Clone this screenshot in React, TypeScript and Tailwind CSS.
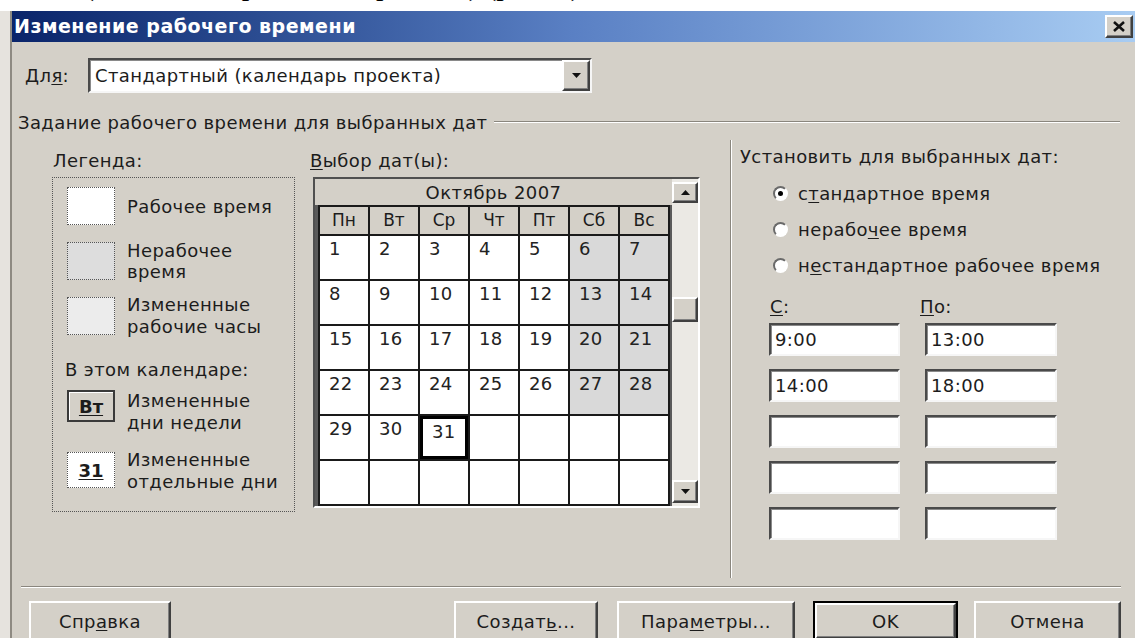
import React from 'react';

// Classic-style dialog for editing working time of a project calendar
const ui = "font-['DejaVu_Sans',Verdana,sans-serif]";

const raised =
  'border-2 border-t-white border-l-white border-b-[#404040] border-r-[#404040] shadow-[inset_-1px_-1px_0_#808080] bg-[#d4d0c8]';
const sunken =
  'border-2 border-t-[#4a4a4a] border-l-[#4a4a4a] border-b-[#f6f6f6] border-r-[#f6f6f6] shadow-[inset_1px_1px_0_#8a8a8a]';

type Cell = { n?: number; off?: boolean; sel?: boolean };

const days = ['Пн', 'Вт', 'Ср', 'Чт', 'Пт', 'Сб', 'Вс'];

const weeks: Cell[][] = Array.from({ length: 6 }, (_, w) =>
  Array.from({ length: 7 }, (_, d) => {
    const n = w * 7 + d + 1;
    if (n > 31) return {};
    return { n, off: d >= 5, sel: n === 31 };
  })
);

const Key = ({ children }: { children: React.ReactNode }) => (
  <span className="underline underline-offset-2">{children}</span>
);

const Arrow = ({ up }: { up?: boolean }) => (
  <svg width="9" height="5" viewBox="0 0 9 5">
    <polygon points={up ? '0,5 9,5 4.5,0' : '0,0 9,0 4.5,5'} fill="#111" />
  </svg>
);

function LegendItem({
  swatch,
  lines,
  boxTop = 0,
}: {
  swatch: React.ReactNode;
  lines: string[];
  boxTop?: number;
}) {
  return (
    <div className="flex items-start">
      <div style={{ marginTop: boxTop }}>{swatch}</div>
      <div className="ml-[12px] leading-[22px] whitespace-nowrap">
        {lines.map((l) => (
          <div key={l}>{l}</div>
        ))}
      </div>
    </div>
  );
}

function Radio({ checked, children }: { checked?: boolean; children: React.ReactNode }) {
  return (
    <div className="flex items-center h-[20px]">
      <div className="w-[15px] h-[15px] rounded-full border-2 border-t-[#6a6a6a] border-l-[#6a6a6a] border-b-white border-r-white bg-white flex items-center justify-center">
        {checked && <div className="w-[5px] h-[5px] rounded-full bg-black" />}
      </div>
      <span className="ml-[10px] whitespace-nowrap">{children}</span>
    </div>
  );
}

function TimeBox({ value }: { value?: string }) {
  return (
    <div className={`h-[33px] ${sunken} bg-white flex items-center pl-[4px]`}>{value}</div>
  );
}

function Button({
  width,
  className = '',
  isDefault,
  children,
}: {
  width: number;
  className?: string;
  isDefault?: boolean;
  children: React.ReactNode;
}) {
  return (
    <div
      className={`h-[40px] shrink-0 ${isDefault ? 'border-2 border-black' : ''} ${className}`}
      style={{ width }}
    >
      <div className={`h-full ${raised} flex items-center justify-center`}>{children}</div>
    </div>
  );
}

export default function App() {
  return (
    <div
      className={`w-[1135px] h-[638px] overflow-hidden bg-[#e6e3de] flex flex-col ${ui} text-[18px] tracking-[0.4px] text-[#1c1c1c]`}
    >
      {/* tail of the text line above the figure */}
      <div className="h-[11px] shrink-0 bg-white overflow-hidden">
        <div className="-mt-[30px] pl-[84px] font-['Liberation_Serif',serif] text-[30px] leading-[30px] tracking-normal text-black whitespace-nowrap">
          (Изменение рабочего времени) (рис. 5)
        </div>
      </div>

      <div className="flex-1 ml-[10px] border-l-2 border-l-[#8e8a82] bg-[#d4d0c8] flex flex-col">
        {/* title bar */}
        <div className="h-[31px] shrink-0 bg-linear-to-r from-[#0a246a] via-[#5a80c4] to-[#a8ccf2] flex items-center justify-between pl-[2px] pr-[2px]">
          <span className="text-white font-bold text-[19px] tracking-[0.5px]">
            Изменение рабочего времени
          </span>
          <div className={`w-[28px] h-[23px] ${raised} flex items-center justify-center`}>
            <svg width="12" height="11" viewBox="0 0 12 11">
              <path d="M1 1 L11 10 M11 1 L1 10" stroke="#111" strokeWidth="2.6" />
            </svg>
          </div>
        </div>

        {/* calendar selector */}
        <div className="mt-[16px] flex items-center h-[35px]">
          <div className="w-[76px] pl-[13px]">
            Дл<Key>я</Key>:
          </div>
          <div className={`w-[504px] h-[35px] ${sunken} bg-white flex`}>
            <div className="flex-1 flex items-center pl-[5px]">Стандартный (календарь проекта)</div>
            <div className={`w-[28px] ${raised} flex items-center justify-center`}>
              <Arrow />
            </div>
          </div>
        </div>

        {/* section heading */}
        <div className="mt-[20px] h-[20px] flex items-start">
          <span className="pl-[6px] leading-[20px] whitespace-nowrap">
            Задание рабочего времени для выбранных дат
          </span>
          <div className="flex-1 ml-[6px] mr-[15px] mt-[8px] border-t border-t-[#8a867e] border-b border-b-white" />
        </div>

        <div className="h-[453px] flex">
          {/* legend */}
          <div className="ml-[40px] w-[243px] pt-[18px] shrink-0">
            <div className="h-[20px] leading-[20px] pl-[1px]">Легенда:</div>
            <div className="mt-[6px] h-[335px] border border-dotted border-[#555] pl-[14px] pt-[9px]">
              <div className="flex items-center h-[38px]">
                <div className="w-[48px] h-[38px] bg-white border border-dotted border-[#555]" />
                <span className="ml-[12px] whitespace-nowrap">Рабочее время</span>
              </div>
              <div className="mt-[17px] flex items-center h-[38px]">
                <div className="w-[48px] h-[38px] bg-[#dddddd] border border-dotted border-[#555]" />
                <div className="ml-[12px] leading-[21px]">
                  <div>Нерабочее</div>
                  <div>время</div>
                </div>
              </div>
              <div className="mt-[17px] flex items-center h-[38px]">
                <div className="w-[48px] h-[38px] bg-[#ececec] border border-dotted border-[#555]" />
                <div className="ml-[12px] leading-[22px] whitespace-nowrap">
                  <div>Измененные</div>
                  <div>рабочие часы</div>
                </div>
              </div>
              <div className="mt-[25px] -ml-[2px] h-[20px] leading-[20px] whitespace-nowrap">
                В этом календаре:
              </div>
              <div className="mt-[10px]">
                <LegendItem
                  lines={['Измененные', 'дни недели']}
                  swatch={
                    <div className="w-[48px] h-[32px] border-2 border-[#3a3a3a] shadow-[inset_1px_1px_0_#fff] flex items-center justify-center font-bold tracking-normal">
                      <span className="underline underline-offset-2">Вт</span>
                    </div>
                  }
                />
              </div>
              <div className="mt-[15px]">
                <LegendItem
                  boxTop={3}
                  lines={['Измененные', 'отдельные дни']}
                  swatch={
                    <div className="w-[48px] h-[36px] bg-white border border-dotted border-[#555] flex items-center justify-center font-bold tracking-normal">
                      <span className="underline underline-offset-2">31</span>
                    </div>
                  }
                />
              </div>
            </div>
          </div>

          {/* date picker */}
          <div className="ml-[15px] w-[390px] pt-[18px] shrink-0">
            <div className="h-[20px] leading-[20px]">
              <Key>В</Key>ыбор дат(ы):
            </div>
            <div className="ml-[3px] mt-[6px] w-[387px] h-[331px] border-2 border-t-[#505050] border-l-[#505050] border-b-white border-r-white flex">
              <div className="w-[357px] flex flex-col bg-[#5a5a5a]">
                <div className="h-[26px] flex items-center justify-center bg-[#d4d0c8]">Октябрь 2007</div>
                <div className="ml-[3px] w-[352px] grid grid-cols-7 grid-rows-[27px_repeat(6,43px)] gap-[2px] p-[2px] bg-[#1a1a1a]">
                  {days.map((d) => (
                    <div key={d} className="bg-[#d4d0c8] flex items-center justify-center tracking-normal text-[17px]">
                      {d}
                    </div>
                  ))}
                  {weeks.flat().map((c, i) => (
                    <div
                      key={i}
                      className={`pl-[9px] pt-[3px] leading-[20px] text-[#222] ${
                        c.off ? 'bg-[#d9d9d9]' : 'bg-white'
                      } ${c.sel ? 'border-[3px] border-black pl-[6px] pt-0' : ''}`}
                    >
                      {c.n}
                    </div>
                  ))}
                </div>
              </div>
              <div className="w-[26px] flex flex-col bg-[#ebe9e4]">
                <div className={`mt-[3px] h-[21px] ${raised} flex items-center justify-center`}>
                  <Arrow up />
                </div>
                <div className={`mt-[94px] h-[25px] ${raised}`} />
                <div className={`mt-[158px] h-[23px] ${raised} flex items-center justify-center`}>
                  <Arrow />
                </div>
              </div>
            </div>
          </div>

          {/* separator */}
          <div className="ml-[30px] mt-[7px] h-[438px] border-l border-l-[#8a867e] border-r border-r-white" />

          {/* settings for selected dates */}
          <div className="ml-[8px] pt-[14px]">
            <div className="h-[20px] leading-[20px] whitespace-nowrap">Установить для выбранных дат:</div>
            <div className="ml-[33px] mt-[16px] flex flex-col gap-[16px]">
              <Radio checked>
                с<Key>т</Key>андартное время
              </Radio>
              <Radio>
                нерабо<Key>ч</Key>ее время
              </Radio>
              <Radio>
                н<Key>е</Key>стандартное рабочее время
              </Radio>
            </div>
            <div className="mt-[22px] flex">
              <div className="ml-[29px] w-[131px]">
                <div className="h-[20px] leading-[20px] pl-[1px]">
                  <Key>С</Key>:
                </div>
                <div className="mt-[6px] flex flex-col gap-[13px]">
                  <TimeBox value="9:00" />
                  <TimeBox value="14:00" />
                  <TimeBox />
                  <TimeBox />
                  <TimeBox />
                </div>
              </div>
              <div className="ml-[25px] w-[132px]">
                <div className="h-[20px] leading-[20px] -ml-[5px]">
                  <Key>П</Key>о:
                </div>
                <div className="mt-[6px] flex flex-col gap-[13px]">
                  <TimeBox value="13:00" />
                  <TimeBox value="18:00" />
                  <TimeBox />
                  <TimeBox />
                  <TimeBox />
                </div>
              </div>
            </div>
          </div>
        </div>

        {/* bottom separator and buttons */}
        <div className="ml-[9px] mr-[14px] border-t border-t-[#8a867e] border-b border-b-white" />
        <div className="mt-[13px] flex">
          <Button width={142} className="ml-[17px]">
            Спр<Key>а</Key>вка
          </Button>
          <Button width={144} className="ml-[283px]">
            Создат<Key>ь</Key>...
          </Button>
          <Button width={178} className="ml-[19px]">
            Пара<Key>м</Key>етры...
          </Button>
          <Button width={145} className="ml-[18px]" isDefault>
            OK
          </Button>
          <Button width={147} className="ml-[16px]">
            Отмена
          </Button>
        </div>
      </div>
    </div>
  );
}
